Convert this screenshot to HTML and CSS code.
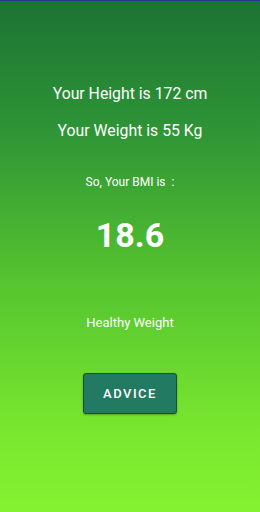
FILE: index.html
```html
<!DOCTYPE html>
<html lang="en">
<head>
  <meta charset="UTF-8" />
  <meta name="viewport" content="width=device-width, initial-scale=1.0" />
  <title>BMI Result</title>
  <link rel="stylesheet" href="styles.css">
</head>
<body>
  <div class="screen">
    <p class="info height">Your Height is 172 cm</p>
    <p class="info weight">Your Weight is 55 Kg</p>
    <p class="label">So, Your BMI is &nbsp;:</p>
    <div class="bmi">18.6</div>
    <p class="status">Healthy Weight</p>
    <button class="advice">ADVICE</button>
  </div>
</body>
</html>
```

FILE: styles.css
```css
body {
  margin: 0;
  padding: 0;
  font-family: Roboto, "Noto Sans", sans-serif;
  color: #fff;
}
.screen {
  height: 512px;
  box-sizing: border-box;
  border-top: 1px solid #283593;
  background: linear-gradient(to bottom, #1c7234 0%, #2e9436 25%, #55c42f 55%, #7ae82f 85%, #85f231 100%);
  display: flex;
  flex-direction: column;
  align-items: center;
}
p {
  margin: 0;
}
.info {
  font-size: 15.8px;
  line-height: 20px;
}
.height {
  margin-top: 83px;
}
.weight {
  margin-top: 17px;
}
.label {
  font-size: 12px;
  line-height: 14px;
  margin-top: 34px;
}
.bmi {
  font-size: 34px;
  font-weight: bold;
  line-height: 40px;
  margin-top: 26px;
}
.status {
  font-size: 13px;
  line-height: 16px;
  margin-top: 60px;
}
.advice {
  margin-top: 42px;
  width: 94px;
  height: 41px;
  background: #237a62;
  border: 1px solid #1a4d3c;
  border-radius: 3px;
  color: #fff;
  font-family: Roboto, sans-serif;
  font-weight: 500;
  font-size: 13px;
  letter-spacing: 1.5px;
  box-shadow: 0 1px 2px rgba(0, 0, 0, 0.3);
}
```
